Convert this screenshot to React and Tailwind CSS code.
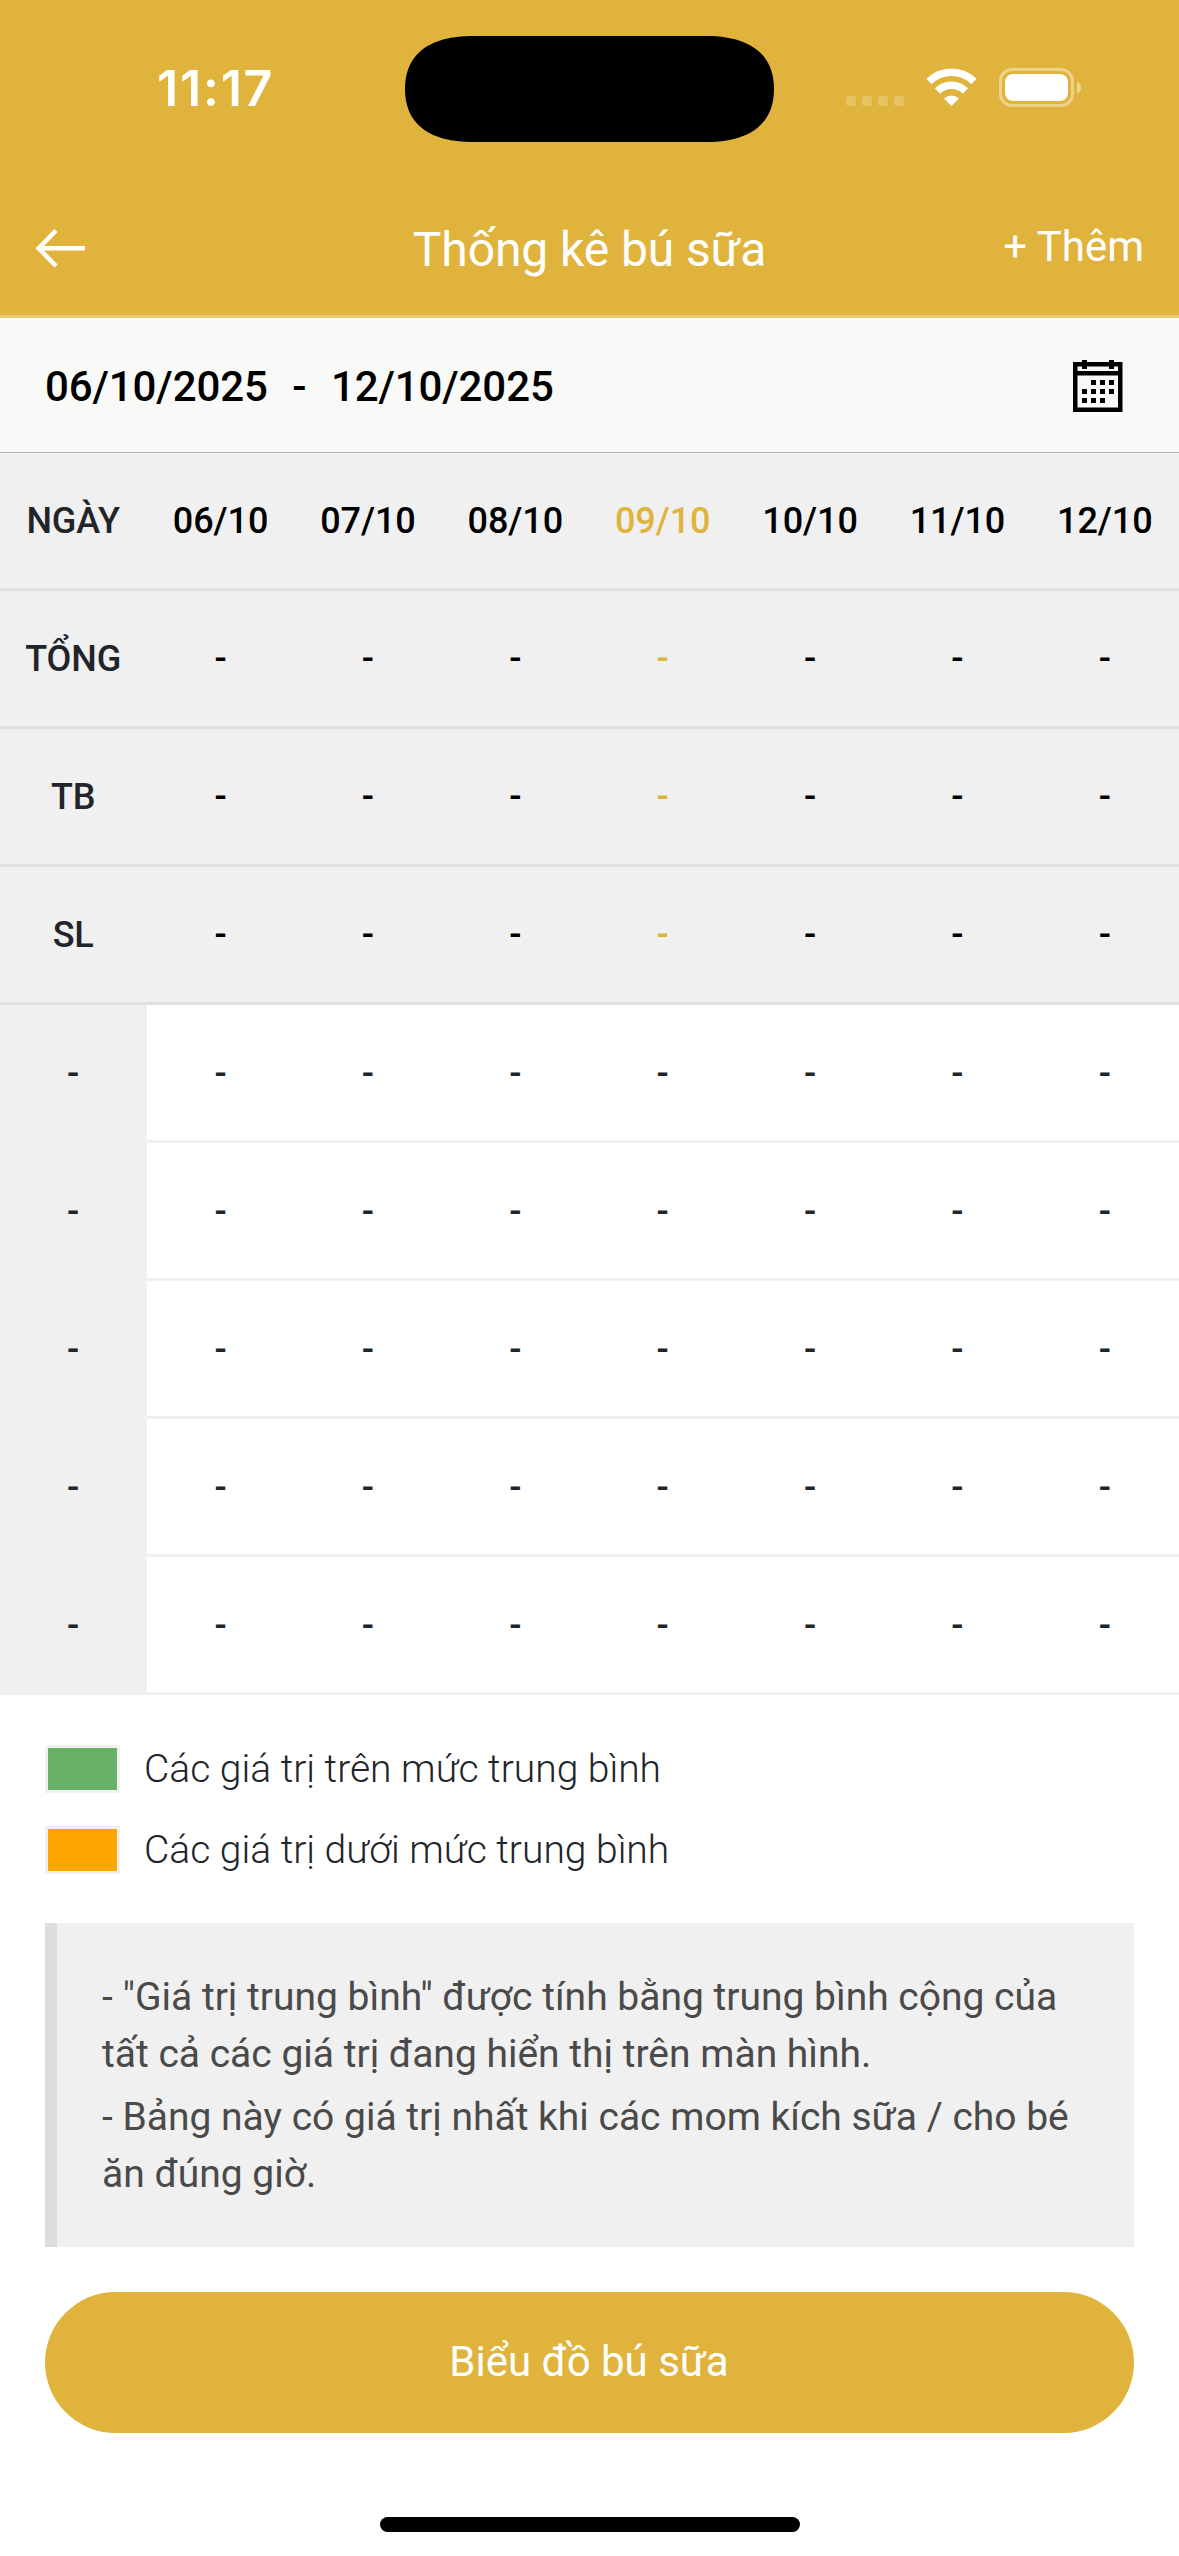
const DAYS = ["06/10", "07/10", "08/10", "09/10", "10/10", "11/10", "12/10"];
const SUMMARY = ["TỔNG", "TB", "SL"];
const TODAY = "09/10";

function StatusBar() {
  return (
    <div className="flex h-[178px] items-start justify-between">
      <div className="w-[405px] pl-[157px] pt-[58px] font-[Inter,sans-serif] text-[50px] leading-[60px] font-semibold tracking-[1.8px]">11:17</div>
      <svg className="mt-[36px]" width="369" height="106" viewBox="0 0 369 106">
        <path d="M68 0H301C322 0 369 4 369 53S322 106 301 106H68C47 106 0 102 0 53S47 0 68 0Z" fill="#000" />
      </svg>
      <svg className="mt-[55px]" width="405" height="70" viewBox="774 55 405 70">
        <g fill="#fff" fillOpacity=".2">
          <rect x="846" y="96" width="10" height="10" rx="3.500" />
          <rect x="862" y="96" width="10" height="10" rx="3.500" />
          <rect x="878" y="96" width="10" height="10" rx="3.500" />
          <rect x="894" y="96" width="10" height="10" rx="3.500" />
        </g>
        <g fill="none" stroke="#fff">
          <path d="M929 81.500A32 32 0 0 1 974 81.500" strokeWidth="7.500" />
          <path d="M937.500 91A20 20 0 0 1 965.500 91" strokeWidth="7.500" />
        </g>
        <path d="M951.500 106L944 98.500A11 11 0 0 1 959 98.500Z" fill="#fff" />
        <rect x="1000.500" y="69.500" width="72" height="36" rx="11.500" fill="none" stroke="#fff" strokeOpacity=".4" strokeWidth="3" />
        <rect x="1005" y="74" width="63" height="27" rx="8" fill="#fff" />
        <path d="M1077 81.500Q1081 83.500 1081 87.500T1077 93.500Z" fill="#fff" fillOpacity=".45" />
      </svg>
    </div>
  );
}

function Header() {
  return (
    <header className="h-[318px] border-b-[3px] border-[#e9cb77] bg-[#e0b43c] text-white">
      <StatusBar />
      <div className="grid h-[137px] grid-cols-3">
        <svg className="mt-[47px] ml-[30px]" width="60" height="48" viewBox="30 225 60 48">
          <path d="M85 248.300H38.500M56 230.500L38.700 248.300L56 266" fill="none" stroke="#fff" strokeWidth="4.500" />
        </svg>
        <h1 className="pt-[44px] text-center text-[48px] leading-[56px] tracking-[-0.1px] whitespace-nowrap">Thống kê bú sữa</h1>
        <div className="pt-[44px] pr-[35px] text-right text-[42px] leading-[50px]">+ Thêm</div>
      </div>
    </header>
  );
}

function CalendarIcon() {
  return (
    <svg className="mt-[1px]" width="50" height="52" viewBox="0 0 50 52">
      <path d="M0 2H49.500V52H0ZM4.500 6.500V11H45V6.500ZM4.500 15.500V47.500H45V15.500Z" fillRule="evenodd" />
      <path d="M9 0h5v9H9zM36 0h5v9h-5z" />
      <path d="M18 20h5v5h-5zM27 20h5v5h-5zM36 20h5v5h-5zM9 29h5v5H9zM18 29h5v5h-5zM27 29h5v5h-5zM36 29h5v5h-5zM9 38h5v5H9zM18 38h5v5h-5zM27 38h5v5h-5z" />
    </svg>
  );
}

function SummaryRow({ label, values }) {
  return (
    <div className="grid h-[138px] grid-cols-8 items-center border-b-[3px] border-[#e0e0e0] bg-[#f0f0f0] pt-[1px] text-center text-[36px] font-medium tracking-[-0.1px] text-black">
      <div className="pr-[1px] text-[#212529]">{label}</div>
      {DAYS.map((day, i) => (
        <div key={day} className={day === TODAY ? "pr-[1px] text-[#e0b43c]" : "pr-[1px]"}>{values[i]}</div>
      ))}
    </div>
  );
}

function EmptyRow() {
  return (
    <div className="grid h-[138px] grid-cols-8 text-center text-[36px] leading-[138px] font-medium tracking-[-0.1px] text-[#212529]">
      <div className="h-[138px] bg-[#f0f0f0] pr-[1px]">-</div>
      {DAYS.map((day) => (
        <div key={day} className="h-[138px] border-b-[3px] border-[#f0f0f0] pr-[1px]">-</div>
      ))}
    </div>
  );
}

export default function App() {
  return (
    <div className="flex h-[2556px] w-[1179px] flex-col overflow-hidden bg-white font-[Roboto,sans-serif]">
      <Header />
      <div className="flex h-[135px] items-center justify-between border-b border-[#b8b8b8] bg-[#f9f9f8] pr-[56px] pl-[45px] text-[42px] font-medium text-black">
        <div className="flex gap-[24.500px] pt-[2px] tracking-[-0.1px]">
          <span>06/10/2025</span>
          <span>-</span>
          <span>12/10/2025</span>
        </div>
        <CalendarIcon />
      </div>
      <SummaryRow label="NGÀY" values={DAYS} />
      {SUMMARY.map((label) => (
        <SummaryRow key={label} label={label} values={DAYS.map(() => "-")} />
      ))}
      {[0, 1, 2, 3, 4].map((i) => (
        <EmptyRow key={i} />
      ))}
      <div className="mt-[50px] flex flex-col gap-[33px] px-[45px] text-[39px] leading-[48px] font-light text-[#212529]">
        <div className="flex gap-6">
          <div className="h-[48px] w-[75px] border-[3px] border-[#f0f0f0] bg-[#68b168]" />
          <span>Các giá trị trên mức trung bình</span>
        </div>
        <div className="flex gap-6">
          <div className="h-[48px] w-[75px] border-[3px] border-[#f0f0f0] bg-[#ffa500]" />
          <span>Các giá trị dưới mức trung bình</span>
        </div>
      </div>
      <div className="mx-[45px] mt-[49px] flex h-[324px] flex-col gap-[6px] border-l-[12px] border-[#ddd] bg-[#f0f0f0] pt-[46px] pl-[45px] text-[39px] leading-[57px] text-[#4a4a4a]">
        <p>- "Giá trị trung bình" được tính bằng trung bình cộng của<br />tất cả các giá trị đang hiển thị trên màn hình.</p>
        <p>- Bảng này có giá trị nhất khi các mom kích sữa / cho bé<br />ăn đúng giờ.</p>
      </div>
      <button className="mx-[45px] mt-[45px] h-[141px] shrink-0 rounded-full bg-[#e0b43c] pr-[1px] pb-[2px] text-[42px] text-white">Biểu đồ bú sữa</button>
      <div className="mt-[84px] h-[15px] w-[420px] shrink-0 self-center rounded-full bg-black" />
    </div>
  );
}
